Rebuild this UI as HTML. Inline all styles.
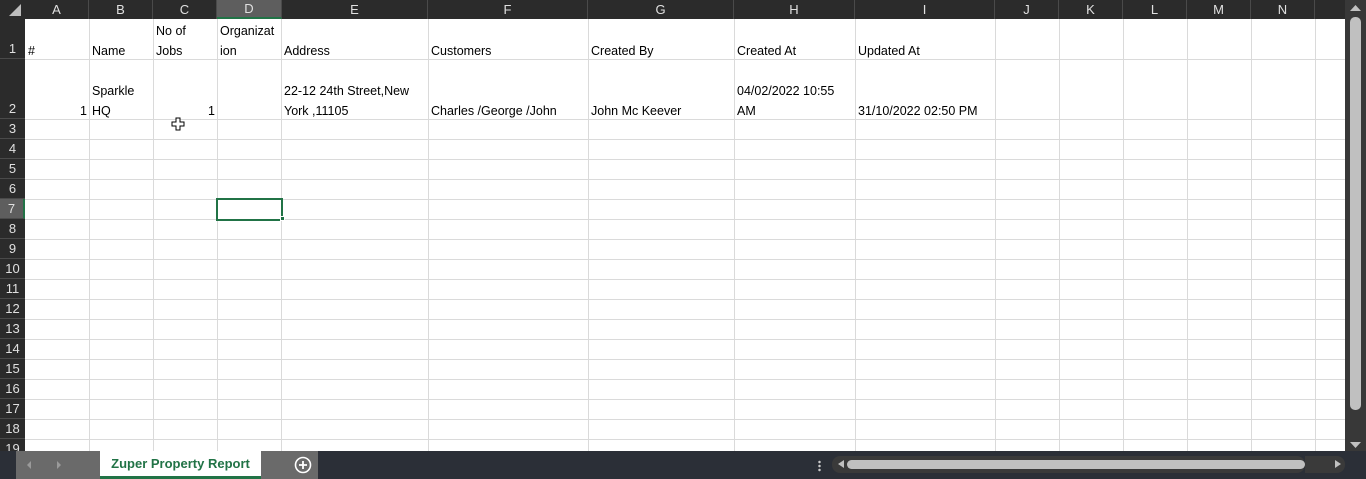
<!DOCTYPE html>
<html><head><meta charset="utf-8"><style>
*{margin:0;padding:0;box-sizing:border-box}
body{width:1366px;height:479px;overflow:hidden;background:#fff;position:relative;font-family:"Liberation Sans",Arial,sans-serif;font-size:12.5px;color:#000}
.a{position:absolute}
.v{position:absolute;top:19px;height:432px;width:1px;background:#dadada}
.h{position:absolute;left:25px;width:1320px;height:1px;background:#dadada}
.ch{position:absolute;top:0;height:19px;color:#e0e0e0;font-size:13px;text-align:center;line-height:19px;border-right:1px solid #4a4a4a}
.rh{position:absolute;left:0;width:25px;color:#e0e0e0;font-size:13px;text-align:center;border-bottom:1px solid #4a4a4a}
.t{position:absolute;line-height:20px;white-space:nowrap;margin-top:1px}
</style></head><body>
<div class="a" style="left:0;top:0;width:1345px;height:19px;background:#2b2b2b"></div>
<div class="a" style="left:0;top:0;width:25px;height:451px;background:#2b2b2b"></div>
<svg class="a" style="left:8px;top:3px" width="14" height="14"><polygon points="13,1 13,13 1,13" fill="#bdbdbd"/></svg>
<div class="ch" style="left:25px;width:64px">A</div>
<div class="ch" style="left:89px;width:64px">B</div>
<div class="ch" style="left:153px;width:64px">C</div>
<div class="ch" style="left:217px;width:65px;background:#5e5e5e;border-bottom:2px solid #217346;line-height:17px">D</div>
<div class="ch" style="left:282px;width:146px">E</div>
<div class="ch" style="left:428px;width:160px">F</div>
<div class="ch" style="left:588px;width:146px">G</div>
<div class="ch" style="left:734px;width:121px">H</div>
<div class="ch" style="left:855px;width:140px">I</div>
<div class="ch" style="left:995px;width:64px">J</div>
<div class="ch" style="left:1059px;width:64px">K</div>
<div class="ch" style="left:1123px;width:64px">L</div>
<div class="ch" style="left:1187px;width:64px">M</div>
<div class="ch" style="left:1251px;width:64px">N</div>

<div class="rh" style="top:19px;height:40px;line-height:60px">1</div>
<div class="rh" style="top:59px;height:60px;line-height:100px">2</div>
<div class="rh" style="top:119px;height:20px;line-height:20px">3</div>
<div class="rh" style="top:139px;height:20px;line-height:20px">4</div>
<div class="rh" style="top:159px;height:20px;line-height:20px">5</div>
<div class="rh" style="top:179px;height:20px;line-height:20px">6</div>
<div class="rh" style="top:199px;height:20px;line-height:20px;background:#5e5e5e;border-right:2px solid #217346">7</div>
<div class="rh" style="top:219px;height:20px;line-height:20px">8</div>
<div class="rh" style="top:239px;height:20px;line-height:20px">9</div>
<div class="rh" style="top:259px;height:20px;line-height:20px">10</div>
<div class="rh" style="top:279px;height:20px;line-height:20px">11</div>
<div class="rh" style="top:299px;height:20px;line-height:20px">12</div>
<div class="rh" style="top:319px;height:20px;line-height:20px">13</div>
<div class="rh" style="top:339px;height:20px;line-height:20px">14</div>
<div class="rh" style="top:359px;height:20px;line-height:20px">15</div>
<div class="rh" style="top:379px;height:20px;line-height:20px">16</div>
<div class="rh" style="top:399px;height:20px;line-height:20px">17</div>
<div class="rh" style="top:419px;height:20px;line-height:20px">18</div>
<div class="rh" style="top:439px;height:20px;line-height:20px">19</div>

<div class="v" style="left:89px"></div><div class="v" style="left:153px"></div><div class="v" style="left:217px"></div><div class="v" style="left:281px"></div><div class="v" style="left:428px"></div><div class="v" style="left:588px"></div><div class="v" style="left:734px"></div><div class="v" style="left:855px"></div><div class="v" style="left:995px"></div><div class="v" style="left:1059px"></div><div class="v" style="left:1123px"></div><div class="v" style="left:1187px"></div><div class="v" style="left:1251px"></div><div class="v" style="left:1315px"></div>
<div class="h" style="top:59px"></div><div class="h" style="top:119px"></div><div class="h" style="top:139px"></div><div class="h" style="top:159px"></div><div class="h" style="top:179px"></div><div class="h" style="top:199px"></div><div class="h" style="top:219px"></div><div class="h" style="top:239px"></div><div class="h" style="top:259px"></div><div class="h" style="top:279px"></div><div class="h" style="top:299px"></div><div class="h" style="top:319px"></div><div class="h" style="top:339px"></div><div class="h" style="top:359px"></div><div class="h" style="top:379px"></div><div class="h" style="top:399px"></div><div class="h" style="top:419px"></div><div class="h" style="top:439px"></div>

<div class="t" style="left:28px;top:40px">#</div>
<div class="t" style="left:92px;top:40px">Name</div>
<div class="t" style="left:156px;top:20px">No of<br>Jobs</div>
<div class="t" style="left:220px;top:20px">Organizat<br>ion</div>
<div class="t" style="left:284px;top:40px">Address</div>
<div class="t" style="left:431px;top:40px">Customers</div>
<div class="t" style="left:591px;top:40px">Created By</div>
<div class="t" style="left:737px;top:40px">Created At</div>
<div class="t" style="left:858px;top:40px">Updated At</div>

<div class="t" style="left:80px;top:100px">1</div>
<div class="t" style="left:92px;top:80px">Sparkle<br>HQ</div>
<div class="t" style="left:208px;top:100px">1</div>
<div class="t" style="left:284px;top:80px">22-12 24th Street,New<br>York ,11105</div>
<div class="t" style="left:431px;top:100px">Charles /George /John</div>
<div class="t" style="left:591px;top:100px">John Mc Keever</div>
<div class="t" style="left:737px;top:80px">04/02/2022 10:55<br>AM</div>
<div class="t" style="left:858px;top:100px">31/10/2022 02:50 PM</div>

<svg class="a" style="left:171px;top:117px" width="14" height="14"><path d="M5 1h4v4h4v4h-4v4h-4v-4h-4v-4h4z" fill="#fff" stroke="#000" stroke-width="1"/></svg>

<div class="a" style="left:216px;top:198px;width:67px;height:23px;border:2px solid #217346"></div>
<div class="a" style="left:280px;top:216px;width:5px;height:5px;background:#217346;border:1px solid #fff"></div>

<div class="a" style="left:1345px;top:0;width:21px;height:451px;background:#383838"></div>
<svg class="a" style="left:1349px;top:4px" width="13" height="8"><polygon points="6.5,1 12,7 1,7" fill="#c0c0c0"/></svg>
<div class="a" style="left:1350px;top:17px;width:11px;height:393px;background:#c0c0c0;border-radius:5px"></div>
<svg class="a" style="left:1349px;top:441px" width="13" height="8"><polygon points="1,1 12,1 6.5,7" fill="#c0c0c0"/></svg>

<div class="a" style="left:0;top:451px;width:1366px;height:28px;background:#2b2f37"></div>
<div class="a" style="left:16px;top:451px;width:84px;height:28px;background:#6a6a6a"></div>
<svg class="a" style="left:25px;top:460px" width="40" height="10"><polygon points="6,1 6,9 2,5" fill="#9a9a9a"/><polygon points="32,1 32,9 36,5" fill="#9a9a9a"/></svg>
<div class="a" style="left:100px;top:451px;width:161px;height:28px;background:#fff;border-bottom:3px solid #217346;color:#217346;font-weight:bold;font-size:13px;text-align:center;line-height:26px">Zuper Property Report</div>
<div class="a" style="left:261px;top:451px;width:57px;height:28px;background:#6a6a6a"></div>
<svg class="a" style="left:294px;top:456px" width="18" height="18"><circle cx="9" cy="9" r="7.5" fill="none" stroke="#fff" stroke-width="1.6"/><path d="M9 5v8M5 9h8" stroke="#fff" stroke-width="1.8"/></svg>
<div class="a" style="left:818px;top:460px;width:3px;height:12px;background:radial-gradient(circle,#ccc 1px,transparent 1.5px) 0 0/3px 4px"></div>
<div class="a" style="left:832px;top:456px;width:473px;height:17px;background:#3a3a3a;border-radius:8px"></div>
<svg class="a" style="left:836px;top:459px" width="10" height="10"><polygon points="8,1 8,9 2,5" fill="#c0c0c0"/></svg>
<div class="a" style="left:847px;top:460px;width:458px;height:9px;background:#c0c0c0;border-radius:5px"></div>
<div class="a" style="left:1305px;top:456px;width:40px;height:17px;background:#3a3a3a;border-radius:0 8px 8px 0"></div>
<svg class="a" style="left:1333px;top:459px" width="10" height="10"><polygon points="2,1 2,9 8,5" fill="#c0c0c0"/></svg>
</body></html>
